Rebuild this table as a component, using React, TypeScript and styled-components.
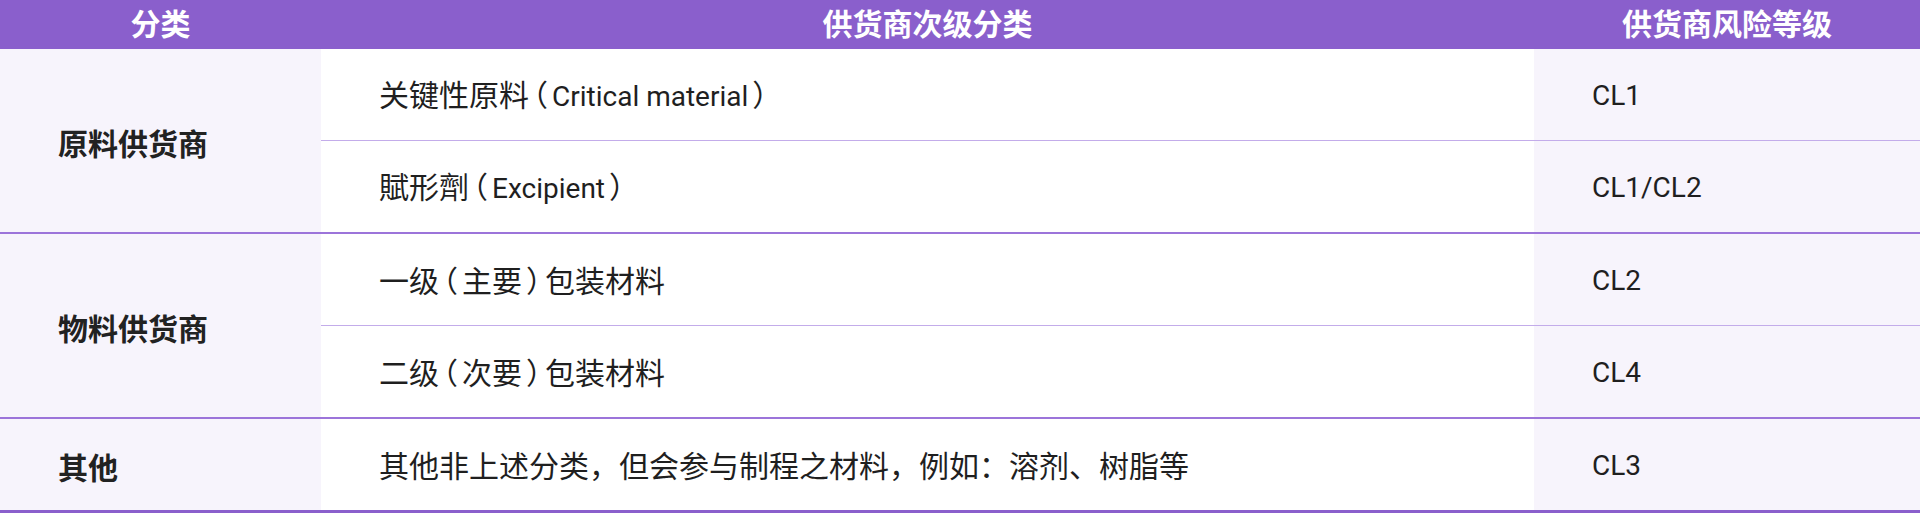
import styled, { createGlobalStyle } from 'styled-components';

const GlobalStyle = createGlobalStyle`
  html, body {
    margin: 0;
    padding: 0;
    background: #ffffff;
  }
  body {
    font-family: Roboto, "Noto Sans CJK SC", sans-serif;
    color: #1f1f1f;
  }
`;

const Table = styled.table`
  width: 1920px;
  border-collapse: collapse;
  table-layout: fixed;
  border-bottom: 3px solid #8a5fcc;
`;

const HeadCell = styled.th`
  height: 49px;
  padding: 0;
  background: #8a5fcc;
  color: #ffffff;
  font-size: 30px;
  font-weight: 700;
  text-align: center;
  vertical-align: middle;
  line-height: 1;
`;

const Row = styled.tr<{ $groupEnd?: boolean }>`
  border-bottom: ${({ $groupEnd }) => ($groupEnd ? '2px solid #9c74da' : '1px solid #c3acea')};
`;

const CategoryCell = styled.td`
  padding: 3px 58px 0;
  background: #f7f4fc;
  font-size: 30px;
  font-weight: 700;
  color: #222222;
  vertical-align: middle;
  border-bottom: 2px solid #9c74da;
`;

const SubCell = styled.td`
  height: 88px;
  padding: 3px 58px 0;
  background: #ffffff;
  font-size: 30px;
  vertical-align: middle;
  line-height: 1.3;
`;

const LevelCell = styled.td`
  height: 88px;
  padding: 3px 58px 0;
  background: #f7f4fc;
  font-size: 28px;
  vertical-align: middle;
  line-height: 1.3;
`;

const Latin = styled.span`
  font-size: 28px;
`;

// full-width brackets in the source are set half-width with a little air
const Paren = styled.span`
  font-feature-settings: "halt" 1;
  padding: 0 4px;
`;

const renderMixed = (text: string) =>
  text.split(/(（|）|[A-Za-z ]+)/).filter(Boolean).map((part, i) => {
    if (part === '（' || part === '）') return <Paren key={i}>{part}</Paren>;
    if (/^[A-Za-z ]+$/.test(part)) return <Latin key={i}>{part}</Latin>;
    return part;
  });

type Group = {
  name: string;
  items: { sub: string; level: string }[];
};

const groups: Group[] = [
  {
    name: '原料供货商',
    items: [
      { sub: '关键性原料（Critical material）', level: 'CL1' },
      { sub: '賦形劑（Excipient）', level: 'CL1/CL2' },
    ],
  },
  {
    name: '物料供货商',
    items: [
      { sub: '一级（主要）包装材料', level: 'CL2' },
      { sub: '二级（次要）包装材料', level: 'CL4' },
    ],
  },
  {
    name: '其他',
    items: [{ sub: '其他非上述分类，但会参与制程之材料，例如：溶剂、树脂等', level: 'CL3' }],
  },
];

export default function App() {
  return (
    <>
      <GlobalStyle />
      <Table>
        <colgroup>
          <col style={{ width: 321 }} />
          <col style={{ width: 1213 }} />
          <col style={{ width: 386 }} />
        </colgroup>
        <thead>
          <tr>
            <HeadCell>分类</HeadCell>
            <HeadCell>供货商次级分类</HeadCell>
            <HeadCell>供货商风险等级</HeadCell>
          </tr>
        </thead>
        <tbody>
          {groups.map((g, gi) =>
            g.items.map((item, i) => (
              <Row
                key={`${gi}-${i}`}
                $groupEnd={i === g.items.length - 1 && gi !== groups.length - 1}
              >
                {i === 0 && <CategoryCell rowSpan={g.items.length}>{g.name}</CategoryCell>}
                <SubCell>{renderMixed(item.sub)}</SubCell>
                <LevelCell>{item.level}</LevelCell>
              </Row>
            ))
          )}
        </tbody>
      </Table>
    </>
  );
}
